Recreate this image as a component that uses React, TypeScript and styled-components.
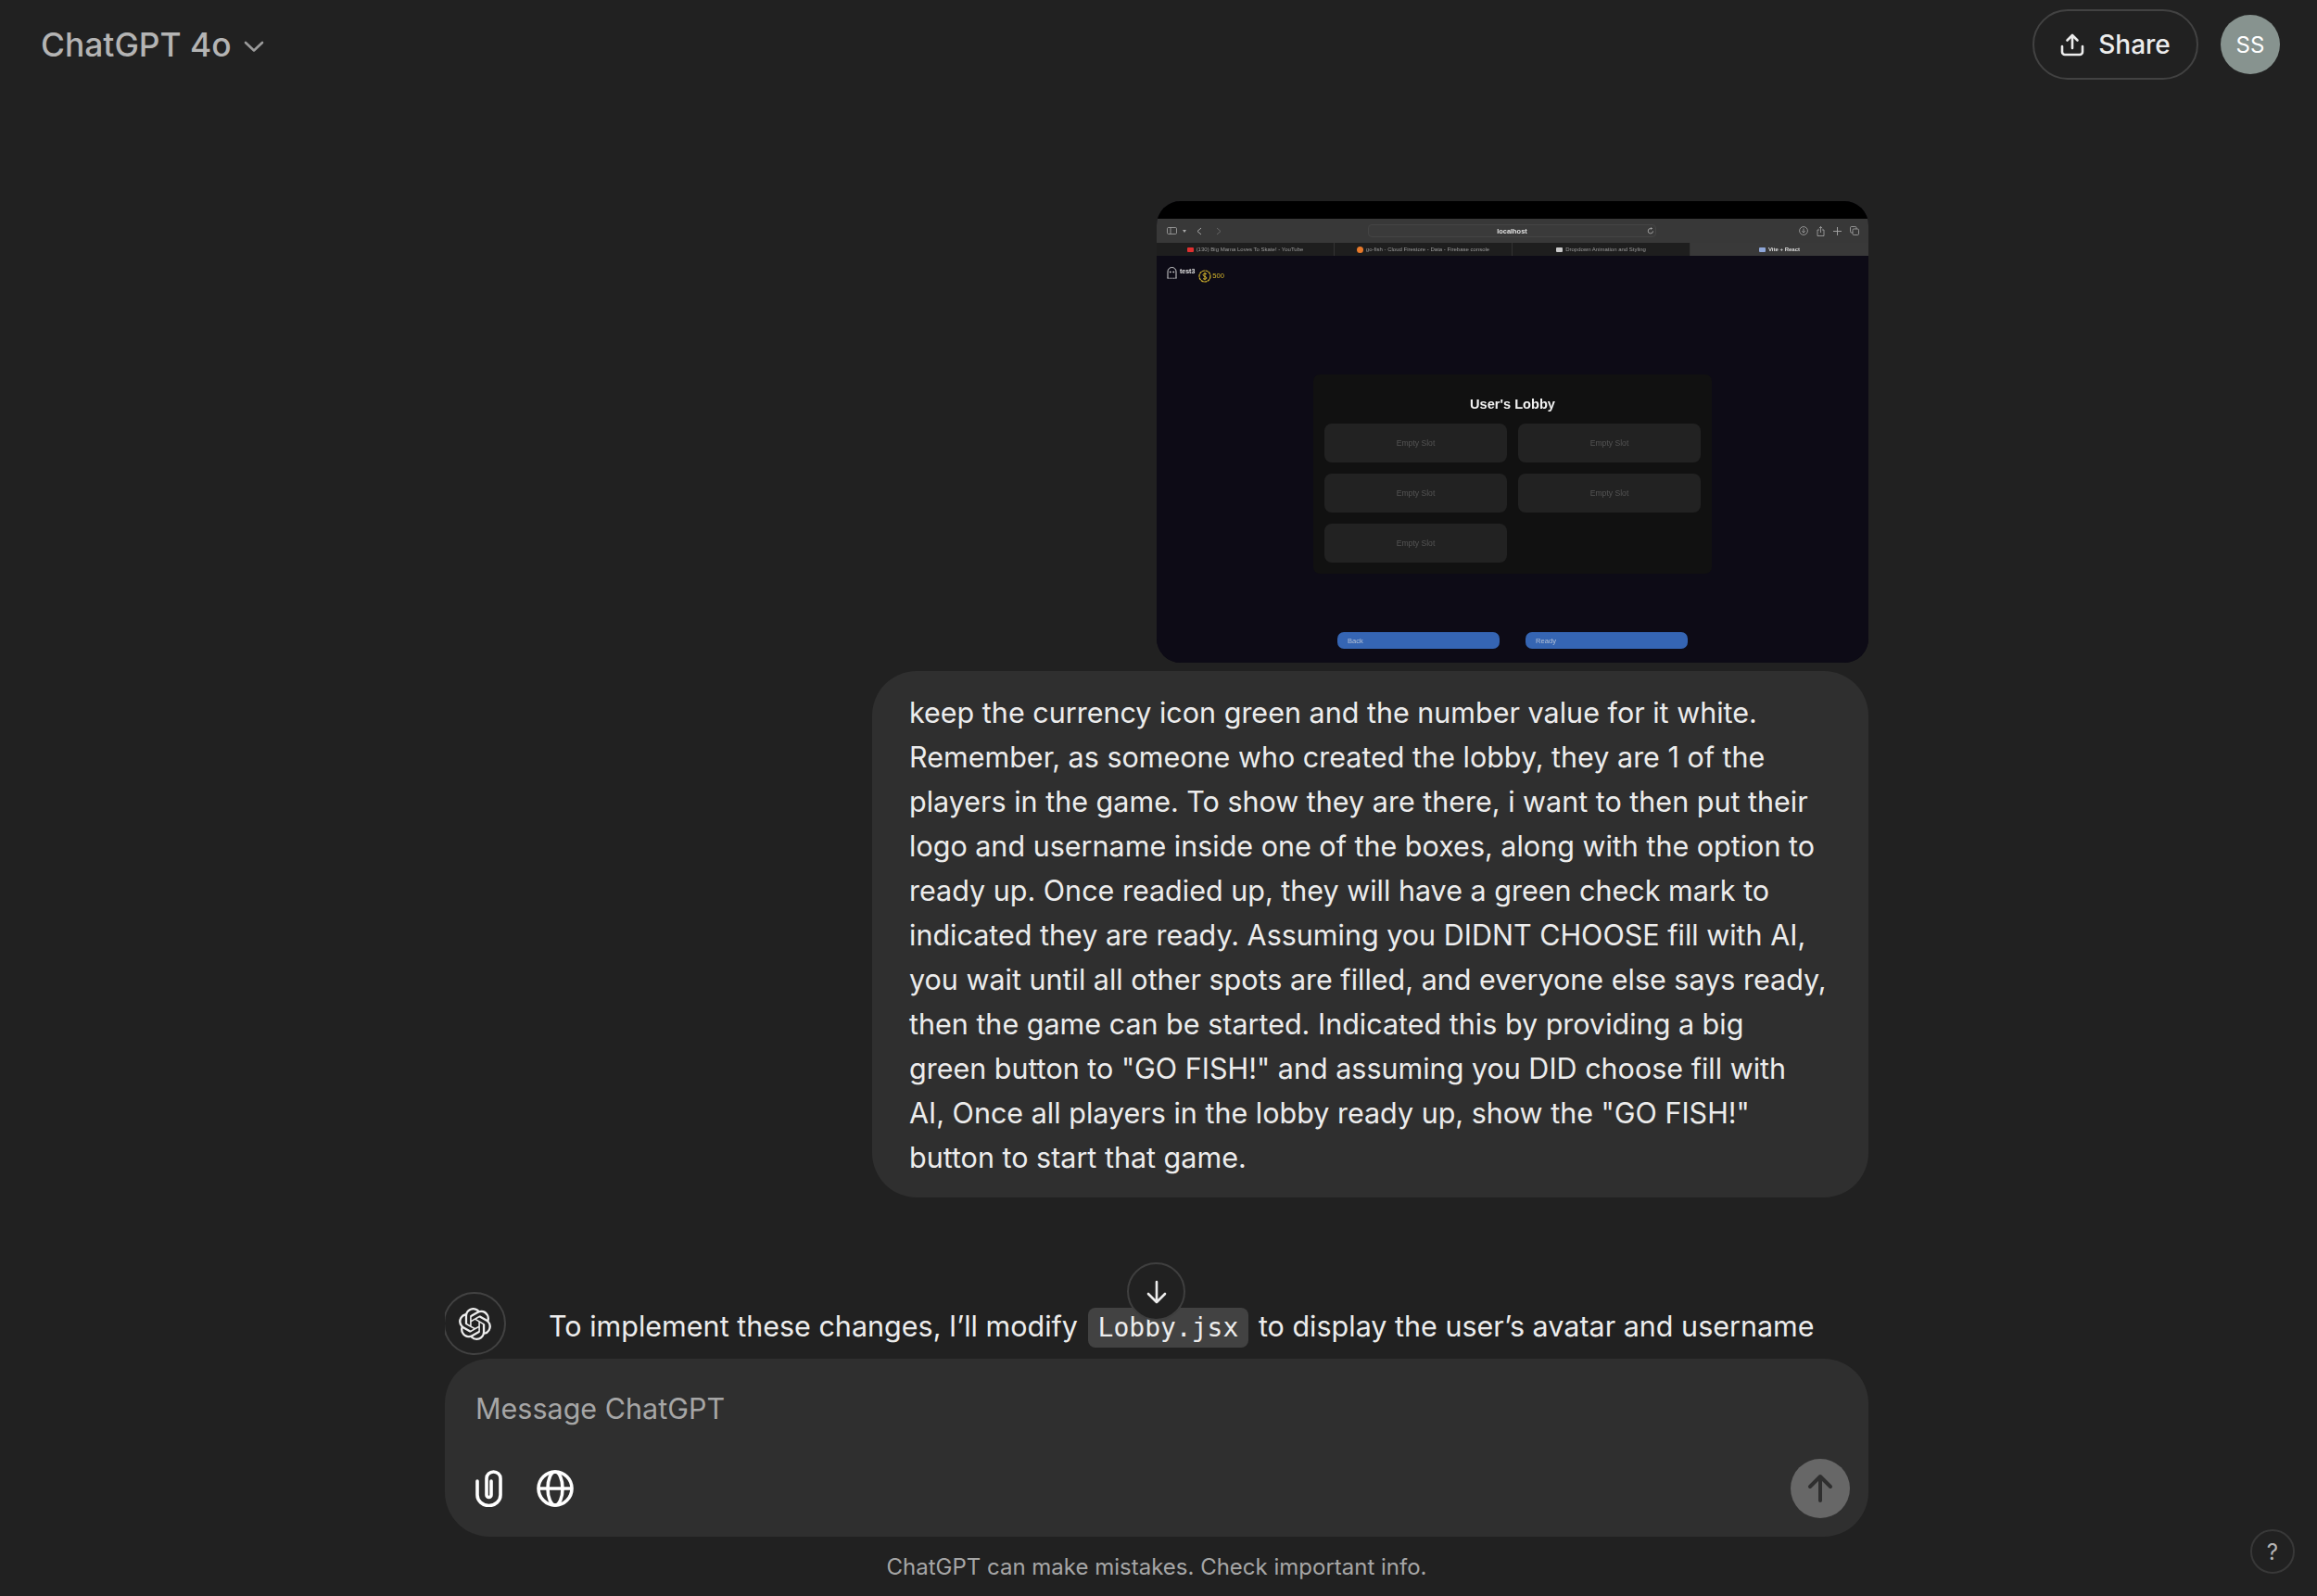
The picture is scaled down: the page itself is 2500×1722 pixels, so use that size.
import React from "react";
import styled, { createGlobalStyle } from "styled-components";
import { SiOpenai } from "react-icons/si";

const GlobalStyle = createGlobalStyle`
  html, body { margin: 0; padding: 0; background: #212121; }
  * { box-sizing: border-box; }
`;

const Page = styled.div`
  position: relative;
  width: 2500px;
  height: 1722px;
  overflow: hidden;
  display: flex;
  flex-direction: column;
  background: #212121;
  color: #ececec;
  font-family: Inter, "Liberation Sans", sans-serif;
`;

const Header = styled.header`
  height: 96px;
  flex: none;
  display: flex;
  align-items: center;
  justify-content: space-between;
  padding: 0 40px 0 44px;
`;

const ModelPicker = styled.div`
  display: flex;
  align-items: center;
  gap: 12px;
  font-size: 35.4px;
  font-weight: 500;
  color: #b4b4b4;
  svg { margin-top: 3px; }
`;

const HeaderActions = styled.div`
  display: flex;
  align-items: center;
  gap: 24px;
`;

const ShareButton = styled.button`
  width: 179px;
  height: 76px;
  display: flex;
  align-items: center;
  justify-content: center;
  gap: 15px;
  padding: 0;
  background: none;
  border: 2px solid #424242;
  border-radius: 38px;
  color: #ececec;
  font: 500 28px Inter, sans-serif;
`;

const UserAvatar = styled.div`
  width: 64px;
  height: 64px;
  border-radius: 50%;
  display: flex;
  align-items: center;
  justify-content: center;
  background: #87938f;
  color: #fff;
  font-size: 24px;
`;

const ConversationFrame = styled.div`
  position: relative;
  flex: 1;
  width: 1536px;
  margin-left: 480px;
  min-height: 0;
  overflow: hidden;
  display: flex;
  flex-direction: column;
  align-items: flex-end;
  padding-top: 121px;
`;

const Screenshot = styled.div`
  width: 768px;
  height: 498px;
  flex: none;
  border-radius: 26px;
  overflow: hidden;
  display: flex;
  flex-direction: column;
  background: #0d0b16;
  font-family: "Liberation Sans", sans-serif;
  filter: blur(0.3px);
`;

const TitleStrip = styled.div`
  height: 19px;
  flex: none;
  background: #000;
`;

const Toolbar = styled.div`
  height: 26px;
  flex: none;
  display: grid;
  grid-template-columns: 228px 311px 1fr;
  align-items: center;
  background: #383838;
  color: #a8a8a8;
`;

const ToolGroup = styled.div<{ $end?: boolean }>`
  display: flex;
  align-items: center;
  gap: ${({ $end }) => ($end ? "9px" : "6px")};
  padding: ${({ $end }) => ($end ? "0 10px 0 0" : "0 0 0 11px")};
  justify-content: ${({ $end }) => ($end ? "flex-end" : "flex-start")};
`;

const UrlBar = styled.div`
  position: relative;
  height: 14px;
  border: 1px solid #444;
  border-radius: 4px;
  background: #3a3a3a;
  display: flex;
  align-items: center;
  justify-content: center;
  color: #e2e2e2;
  font-size: 7.4px;
  font-weight: 700;
  svg {
    position: absolute;
    right: 1px;
    top: 2px;
  }
`;

const TabStrip = styled.div`
  height: 14px;
  flex: none;
  display: grid;
  grid-template-columns: repeat(4, 1fr);
  background: #1e1e1e;
`;

const Tab = styled.div<{ $active?: boolean }>`
  display: flex;
  align-items: center;
  justify-content: center;
  gap: 3px;
  font-size: 6px;
  font-weight: ${({ $active }) => ($active ? 700 : 400)};
  color: ${({ $active }) => ($active ? "#dcdcdc" : "#9a9a9a")};
  background: ${({ $active }) => ($active ? "#393939" : "#1e1e1e")};
  border-right: 1px solid #333;
  &:last-child { border-right: none; }
`;

const TabIcon = styled.span<{ $bg: string; $round?: boolean }>`
  width: 7px;
  height: ${({ $round }) => ($round ? "7px" : "5px")};
  border-radius: ${({ $round }) => ($round ? "50%" : "1px")};
  background: ${({ $bg }) => $bg};
`;

const AppView = styled.div`
  flex: 1;
  display: flex;
  flex-direction: column;
  align-items: center;
  background: #0d0b16;
`;

const Hud = styled.div`
  align-self: flex-start;
  height: 128px;
  display: flex;
  align-items: flex-start;
  gap: 3px;
  padding: 10px 0 0 11px;
  color: #e4e4e4;
  font-size: 7px;
  font-weight: 700;
`;

const HudName = styled.span`
  margin: 3px 1px 0 0;
`;

const Coins = styled.span`
  display: flex;
  align-items: center;
  gap: 1px;
  margin-top: 4px;
  color: #d4b52c;
  font-weight: 400;
  font-size: 7.6px;
`;

const LobbyCard = styled.div`
  width: 430px;
  height: 215px;
  flex: none;
  display: flex;
  flex-direction: column;
  padding: 0 12px;
  background: #111;
  border-radius: 7px;
`;

const LobbyTitle = styled.h2`
  height: 53px;
  margin: 0;
  display: flex;
  align-items: center;
  justify-content: center;
  padding-top: 11px;
  color: #f2f2f2;
  font-size: 14.6px;
  font-weight: 700;
`;

const SlotGrid = styled.div`
  display: grid;
  grid-template-columns: 197px 197px;
  grid-auto-rows: 42px;
  gap: 12px;
`;

const LobbySlot = styled.div`
  display: flex;
  align-items: center;
  justify-content: center;
  background: #222;
  border-radius: 8px;
  color: #545454;
  font-size: 8.6px;
`;

const LobbyButtons = styled.div`
  display: flex;
  gap: 28px;
  margin-top: 63px;
`;

const LobbyButton = styled.div`
  width: 175px;
  height: 18px;
  display: flex;
  align-items: center;
  padding-left: 11px;
  background: #3565b3;
  border-radius: 7px;
  color: #b3c0d6;
  font-size: 7.6px;
`;

const UserBubble = styled.div`
  width: 1075px;
  flex: none;
  margin-top: 9px;
  padding: 21px 40px 19px;
  background: #2f2f2f;
  border-radius: 48px;
  font-size: 30.5px;
  line-height: 48px;
  color: #ececec;
  white-space: nowrap;
`;

const AssistantRow = styled.div`
  align-self: stretch;
  flex: none;
  display: flex;
  align-items: flex-start;
  gap: 46px;
  margin: 102px 0 0 -2px;
`;

const AssistantAvatar = styled.div`
  width: 68px;
  height: 68px;
  flex: none;
  border: 2px solid #424242;
  border-radius: 50%;
  display: flex;
  align-items: center;
  justify-content: center;
  color: #ececec;
`;

const AssistantText = styled.p`
  margin: 13px 0 0;
  font-size: 30.5px;
  line-height: 48px;
  color: #ececec;
  white-space: nowrap;
`;

const InlineCode = styled.code`
  display: inline-block;
  padding: 0 11px;
  margin: 0 2px;
  height: 43px;
  line-height: 43px;
  vertical-align: baseline;
  background: #424242;
  border-radius: 8px;
  font-family: "DejaVu Sans Mono", "Liberation Mono", monospace;
  font-size: 28px;
`;

const ScrollDown = styled.button`
  position: absolute;
  left: 50%;
  bottom: 41px;
  width: 63px;
  height: 63px;
  margin-left: -32px;
  padding: 0;
  display: flex;
  align-items: center;
  justify-content: center;
  background: #212121;
  border: 2px solid #3f3f3f;
  border-radius: 50%;
  color: #ececec;
`;

const Composer = styled.div`
  width: 1536px;
  height: 192px;
  flex: none;
  margin-left: 480px;
  display: flex;
  flex-direction: column;
  padding: 0 20px 20px 33px;
  background: #2f2f2f;
  border-radius: 48px;
`;

const Placeholder = styled.div`
  height: 108px;
  flex: none;
  line-height: 108px;
  font-size: 30.5px;
  color: #a6a6a6;
`;

const ComposerTools = styled.div`
  height: 64px;
  display: flex;
  align-items: center;
  gap: 37px;
  color: #fff;
`;

const SendButton = styled.button`
  width: 64px;
  height: 64px;
  margin-left: auto;
  padding: 0;
  display: flex;
  align-items: center;
  justify-content: center;
  background: #676767;
  border: none;
  border-radius: 50%;
  color: #2f2f2f;
`;

const Footer = styled.div`
  height: 64px;
  flex: none;
  width: 1536px;
  margin-left: 480px;
  display: flex;
  align-items: center;
  justify-content: center;
  font-size: 24px;
  color: #a6a6a6;
`;

const HelpButton = styled.button`
  position: absolute;
  right: 24px;
  bottom: 24px;
  width: 48px;
  height: 48px;
  padding: 0;
  background: none;
  border: 2px solid #383838;
  border-radius: 50%;
  color: #b4b4b4;
  font: 400 24px Inter, sans-serif;
`;

const messageLines = [
  "keep the currency icon green and the number value for it white.",
  "Remember, as someone who created the lobby, they are 1 of the",
  "players in the game. To show they are there, i want to then put their",
  "logo and username inside one of the boxes, along with the option to",
  "ready up. Once readied up, they will have a green check mark to",
  "indicated they are ready. Assuming you DIDNT CHOOSE fill with AI,",
  "you wait until all other spots are filled, and everyone else says ready,",
  'then the game can be started. Indicated this by providing a big',
  'green button to "GO FISH!" and assuming you DID choose fill with',
  'AI, Once all players in the lobby ready up, show the "GO FISH!"',
  "button to start that game.",
];

const tabs = [
  { title: "(130) Big Mama Loves To Skate! - YouTube", color: "#e02f2f" },
  { title: "go-fish - Cloud Firestore - Data - Firebase console", color: "#e8792a", round: true },
  { title: "Dropdown Animation and Styling", color: "#c9c9c9" },
  { title: "Vite + React", color: "#8ea6d8", active: true },
];

function MiniToolbarLeft() {
  return (
    <ToolGroup>
      <svg width="11" height="8" viewBox="0 0 11 8" fill="none" stroke="currentColor" strokeWidth="0.8">
        <rect x="0.5" y="0.5" width="10" height="7" rx="1.2" />
        <path d="M4 .5v7" />
      </svg>
      <svg width="4" height="3" viewBox="0 0 4 3" fill="currentColor">
        <path d="M0 0h4L2 3z" />
      </svg>
      <svg width="6" height="9" viewBox="0 0 6 9" fill="none" stroke="currentColor" strokeWidth="1" style={{ marginLeft: 5 }}>
        <path d="M5 1L1 4.5 5 8" />
      </svg>
      <svg width="6" height="9" viewBox="0 0 6 9" fill="none" stroke="#666" strokeWidth="1" style={{ marginLeft: 9 }}>
        <path d="M1 1l4 3.5L1 8" />
      </svg>
    </ToolGroup>
  );
}

function MiniToolbarRight() {
  return (
    <ToolGroup $end>
      <svg width="10" height="10" viewBox="0 0 10 10" fill="none" stroke="currentColor" strokeWidth="0.8">
        <circle cx="5" cy="5" r="4.4" />
        <path d="M5 2.5v4.5M3.2 5.3L5 7l1.8-1.7" />
      </svg>
      <svg width="9" height="11" viewBox="0 0 9 11" fill="none" stroke="currentColor" strokeWidth="0.8">
        <path d="M3 4H1v6.5h7V4H6M4.5 7V.6M2.8 2.2L4.5.6l1.7 1.6" />
      </svg>
      <svg width="9" height="9" viewBox="0 0 9 9" fill="none" stroke="currentColor" strokeWidth="0.9">
        <path d="M4.5 0v9M0 4.5h9" />
      </svg>
      <svg width="10" height="10" viewBox="0 0 10 10" fill="none" stroke="currentColor" strokeWidth="0.8">
        <rect x="0.5" y="0.5" width="6.5" height="6.5" rx="1.2" />
        <rect x="3" y="3" width="6.5" height="6.5" rx="1.2" fill="#383838" />
      </svg>
    </ToolGroup>
  );
}

function LobbyScreenshot() {
  return (
    <Screenshot>
      <TitleStrip />
      <Toolbar>
        <MiniToolbarLeft />
        <UrlBar>
          localhost
          <svg width="8" height="8" viewBox="0 0 8 8" fill="none" stroke="#b5b5b5" strokeWidth="0.8">
            <path d="M6.6 4.4A2.7 2.7 0 1 1 4 1.5h1.3M4.4.4l1.1 1.1-1.1 1.1" />
          </svg>
        </UrlBar>
        <MiniToolbarRight />
      </Toolbar>
      <TabStrip>
        {tabs.map((tab) => (
          <Tab key={tab.title} $active={tab.active}>
            <TabIcon $bg={tab.color} $round={tab.round} />
            {tab.title}
          </Tab>
        ))}
      </TabStrip>
      <AppView>
        <Hud>
          <svg width="11" height="13" viewBox="0 0 11 13" fill="none" stroke="#e8e8e8" strokeWidth="0.9" style={{ marginTop: 2 }}>
            <path d="M1 12V5a4.5 4.5 0 0 1 9 0v7" />
            <path d="M.5 12.2h10" strokeDasharray="1.4 .8" />
            <circle cx="3.8" cy="5.5" r="0.5" fill="#e8e8e8" />
            <circle cx="7.2" cy="5.5" r="0.5" fill="#e8e8e8" />
          </svg>
          <HudName>test3</HudName>
          <Coins>
            <svg width="14" height="14" viewBox="0 0 14 14" fill="none" stroke="#d4b52c" style={{ marginTop: 1 }}>
              <circle cx="7" cy="7" r="6" strokeWidth="1.2" strokeDasharray="3 0.5" />
              <path d="M9 4.8C8.4 4 5 3.8 5 5.6S9 7.2 9 9c0 1.5-3.4 1.4-4 .5M7 2.8v8.4" strokeWidth="1" />
            </svg>
            500
          </Coins>
        </Hud>
        <LobbyCard>
          <LobbyTitle>User's Lobby</LobbyTitle>
          <SlotGrid>
            {[1, 2, 3, 4, 5].map((n) => (
              <LobbySlot key={n}>Empty Slot</LobbySlot>
            ))}
          </SlotGrid>
        </LobbyCard>
        <LobbyButtons>
          <LobbyButton>Back</LobbyButton>
          <LobbyButton>Ready</LobbyButton>
        </LobbyButtons>
      </AppView>
    </Screenshot>
  );
}

export default function App() {
  return (
    <Page>
      <GlobalStyle />
      <Header>
        <ModelPicker>
          ChatGPT 4o
          <svg width="24" height="14" viewBox="0 0 24 14" fill="none" stroke="#9b9b9b" strokeWidth="2.6" strokeLinecap="round" strokeLinejoin="round">
            <path d="M3 3l9 8.5L21 3" />
          </svg>
        </ModelPicker>
        <HeaderActions>
          <ShareButton>
            <svg width="26" height="26" viewBox="0 0 26 26" fill="none" stroke="currentColor" strokeWidth="2.6" strokeLinecap="round" strokeLinejoin="round">
              <path d="M13 17V3M7.5 8.5L13 3l5.5 5.5" />
              <path d="M2 15v6a3 3 0 0 0 3 3h16a3 3 0 0 0 3-3v-6" />
            </svg>
            Share
          </ShareButton>
          <UserAvatar>SS</UserAvatar>
        </HeaderActions>
      </Header>

      <ConversationFrame>
        <LobbyScreenshot />
        <UserBubble>
          {messageLines.map((line) => (
            <div key={line}>{line}</div>
          ))}
        </UserBubble>
        <AssistantRow>
          <AssistantAvatar>
            <SiOpenai size={35} />
          </AssistantAvatar>
          <AssistantText>
            To implement these changes, I’ll modify <InlineCode>Lobby.jsx</InlineCode> to display the user’s avatar and username
          </AssistantText>
        </AssistantRow>
        <ScrollDown>
          <svg width="28" height="28" viewBox="0 0 28 28" fill="none" stroke="currentColor" strokeWidth="2.6" strokeLinecap="round" strokeLinejoin="round">
            <path d="M14 3v22M5 16l9 9 9-9" />
          </svg>
        </ScrollDown>
      </ConversationFrame>

      <Composer>
        <Placeholder>Message ChatGPT</Placeholder>
        <ComposerTools>
          <svg width="29" height="40" viewBox="0 0 29 40" fill="none" stroke="currentColor" strokeWidth="3.6" strokeLinecap="round" strokeLinejoin="round">
            <path d="M2 12v15a12.5 11.5 0 0 0 25 0V9a7.5 7 0 0 0-15 0v18a2.5 2.5 0 0 0 5 0V12" />
          </svg>
          <svg width="40" height="40" viewBox="0 0 40 40" fill="none" stroke="currentColor" strokeWidth="3.6">
            <circle cx="20" cy="20" r="18" />
            <ellipse cx="20" cy="20" rx="8" ry="18" />
            <path d="M2 20h36" />
          </svg>
          <SendButton>
            <svg width="28" height="32" viewBox="0 0 28 32" fill="none" stroke="currentColor" strokeWidth="4" strokeLinecap="round" strokeLinejoin="round">
              <path d="M14 29V3M3 14L14 3l11 11" />
            </svg>
          </SendButton>
        </ComposerTools>
      </Composer>

      <Footer>ChatGPT can make mistakes. Check important info.</Footer>
      <HelpButton>?</HelpButton>
    </Page>
  );
}
